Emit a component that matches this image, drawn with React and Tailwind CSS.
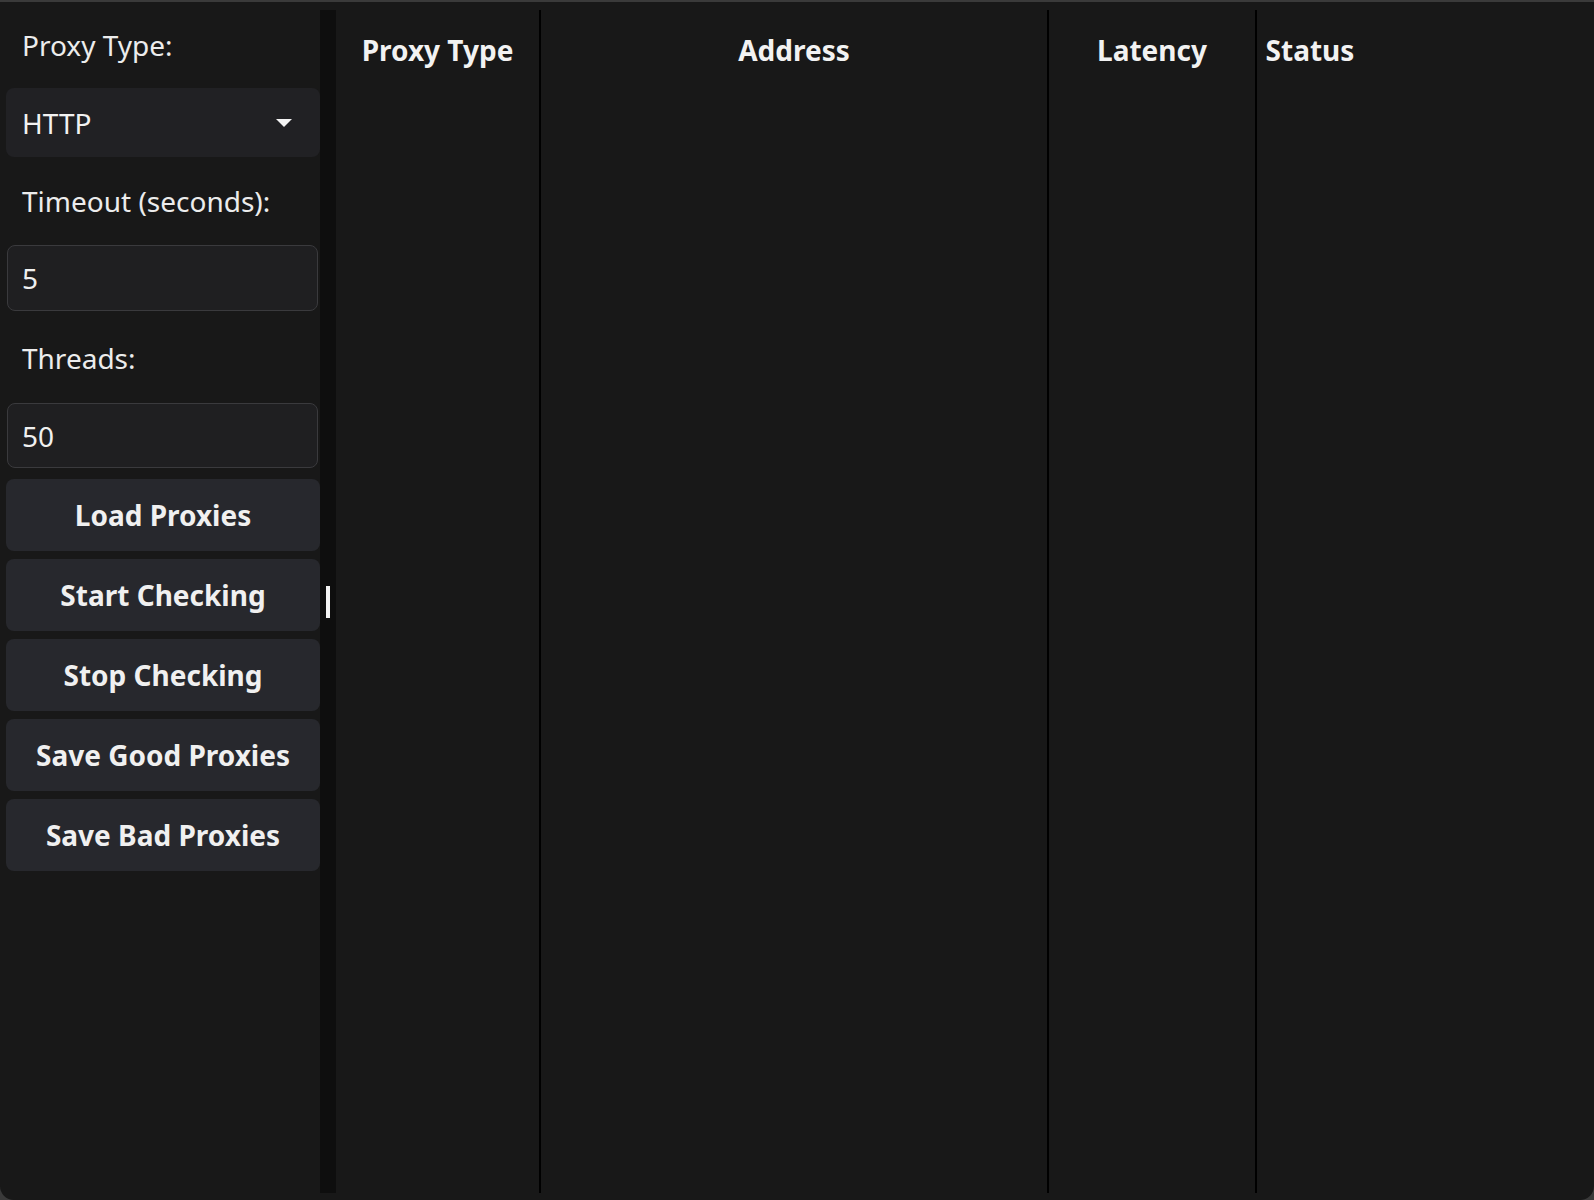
import { useState } from "react";

const buttons = [
  "Load Proxies",
  "Start Checking",
  "Stop Checking",
  "Save Good Proxies",
  "Save Bad Proxies",
];

export default function App() {
  const [proxyType] = useState("HTTP");
  const [timeout, setTimeout] = useState("5");
  const [threads, setThreads] = useState("50");

  return (
    <div
      className="w-[1594px] h-[1200px] bg-[#3a3a3a] text-[#f2f2f2]"
      style={{ fontFamily: '"Noto Sans", "Open Sans", sans-serif' }}
    >
      <div className="w-full h-full flex flex-col bg-[#181818] rounded-b-[14px] overflow-hidden">
        {/* window top edge */}
        <div className="h-[2px] bg-[#3a3a3a]" />

        <div className="flex flex-1 min-h-0">
          {/* Sidebar */}
          <div className="w-[320px] shrink-0 pl-[6px] pt-[24px] flex flex-col">
            <div className="h-[38px] leading-[38px] text-[28px] pl-[16px] text-[#ececec]">
              Proxy Type:
            </div>
            <div className="mt-[24px] h-[69px] bg-[#212124] rounded-[8px] flex items-center justify-between pl-[16px] pr-[28px]">
              <span className="text-[28px] leading-[38px] mt-[1px]">{proxyType}</span>
              <svg width="16" height="8" viewBox="0 0 16 8" className="mt-[1px]">
                <polygon points="0,0 16,0 8,8" fill="#f4f4f4" />
              </svg>
            </div>

            <div className="mt-[25px] h-[38px] leading-[38px] text-[28px] pl-[16px] text-[#ececec]">
              Timeout (seconds):
            </div>
            <input
              value={timeout}
              onChange={(e) => setTimeout(e.target.value)}
              className="mt-[25px] ml-[1px] w-[311px] h-[66px] bg-[#1f1f21] border border-[#3a3a3d] rounded-[8px] pl-[14px] text-[28px] text-[#f0f0f0] outline-none"
            />

            <div className="mt-[28px] h-[38px] leading-[38px] text-[28px] pl-[16px] text-[#ececec]">
              Threads:
            </div>
            <input
              value={threads}
              onChange={(e) => setThreads(e.target.value)}
              className="mt-[26px] ml-[1px] w-[311px] h-[65px] bg-[#1f1f21] border border-[#3a3a3d] rounded-[8px] pl-[14px] text-[28px] text-[#f0f0f0] outline-none"
            />

            <div className="mt-[11px] flex flex-col gap-[8px]">
              {buttons.map((label) => (
                <button
                  key={label}
                  className="h-[72px] w-[314px] bg-[#27282d] rounded-[8px] text-[28px] font-bold text-[#f0f0f0] flex items-center justify-center"
                >
                  {label}
                </button>
              ))}
            </div>
          </div>

          {/* Splitter */}
          <div className="w-[16px] shrink-0 mt-[8px] mb-[7px] bg-[#0e0e0e] flex items-center justify-center">
            <div className="w-[4px] h-[32px] bg-[#f4f4f4]" />
          </div>

          {/* Table */}
          <div className="flex-1 mt-[8px] mb-[7px] flex">
            <div className="w-[205px] shrink-0 border-r-2 border-black">
              <div className="h-[80px] flex items-center justify-center text-[28px] font-bold">
                Proxy Type
              </div>
            </div>
            <div className="w-[508px] shrink-0 border-r-2 border-black">
              <div className="h-[80px] flex items-center justify-center text-[28px] font-bold">
                Address
              </div>
            </div>
            <div className="w-[208px] shrink-0 border-r-2 border-black">
              <div className="h-[80px] flex items-center justify-center text-[28px] font-bold">
                Latency
              </div>
            </div>
            <div className="flex-1">
              <div className="w-[106px] h-[80px] flex items-center justify-center text-[28px] font-bold">
                Status
              </div>
            </div>
          </div>
        </div>
      </div>
    </div>
  );
}
